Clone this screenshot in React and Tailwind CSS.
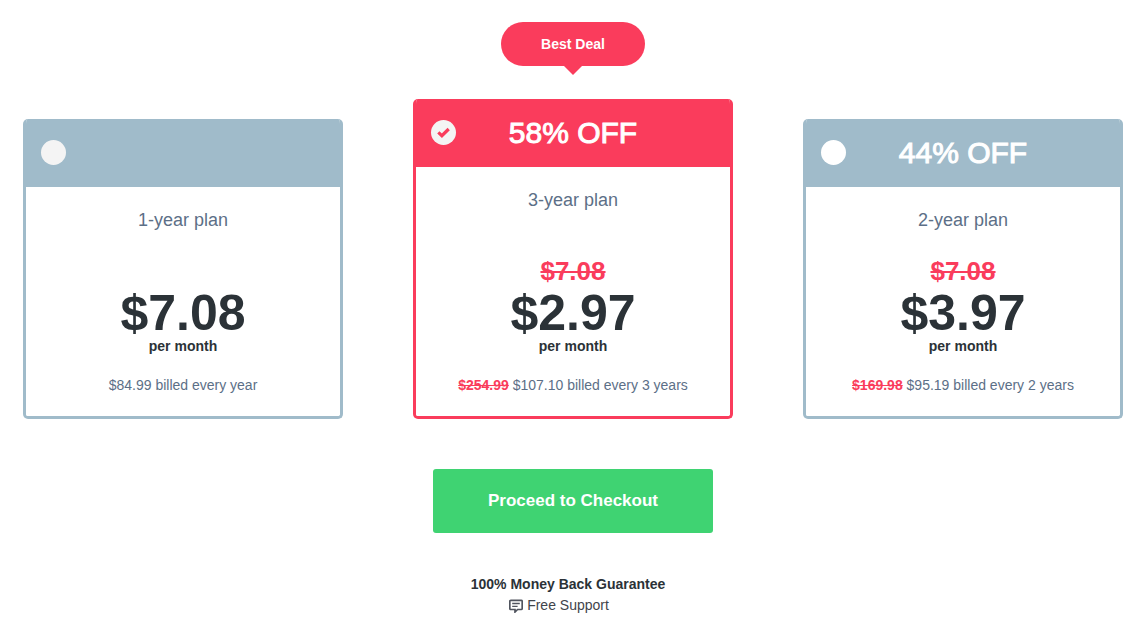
import { useState } from 'react';
import clsx from 'clsx';

const PLANS = [
  { id: '1y', name: '1-year plan', price: '$7.08', billed: '$84.99 billed every year', dot: 'bg-[#f4f4f4]' },
  {
    id: '3y',
    name: '3-year plan',
    off: '58% OFF',
    oldPrice: '$7.08',
    price: '$2.97',
    oldTotal: '$254.99',
    billed: '$107.10 billed every 3 years',
    best: true,
    dot: 'bg-[#f4f4f4]',
  },
  {
    id: '2y',
    name: '2-year plan',
    off: '44% OFF',
    oldPrice: '$7.08',
    price: '$3.97',
    oldTotal: '$169.98',
    billed: '$95.19 billed every 2 years',
    dot: 'bg-white',
  },
];

function PlanCard({ plan, selected, onSelect }) {
  return (
    <label
      htmlFor={`plan-${plan.id}`}
      className={clsx(
        'block w-80 cursor-pointer overflow-hidden rounded-[5px] border-[3px] border-t-0 text-center',
        selected ? 'border-[#fa3c5c]' : 'border-[#a0bbca]'
      )}
    >
      <div
        className={clsx(
          'grid h-[68px] grid-cols-[25px_1fr_25px] items-start px-[15px] pt-[21px]',
          selected ? 'bg-[#fa3c5c]' : 'bg-[#a0bbca]'
        )}
      >
        <span className="grid size-[25px] place-items-center">
          <input
            type="radio"
            name="plan"
            id={`plan-${plan.id}`}
            checked={selected}
            onChange={() => onSelect(plan.id)}
            className={clsx('col-start-1 row-start-1 size-[25px] appearance-none rounded-full', plan.dot)}
          />
          {selected && (
            <svg viewBox="0 0 13 11" className="pointer-events-none col-start-1 row-start-1 h-[11px] w-[13px]" aria-hidden="true">
              <path d="M1.3 5.3 4.9 8.7 11.7 2" fill="none" stroke="#fa3c5c" strokeWidth="3.2" />
            </svg>
          )}
        </span>
        <span className="text-[30px] leading-[26px] text-white [-webkit-text-stroke:1px_white]">{plan.off}</span>
      </div>

      <div className="bg-white pt-5 pb-[21px]">
        <div className="text-lg leading-[26px] text-[#5c6f87]">{plan.name}</div>
        <div className={plan.best ? 'pt-11' : 'pt-6'}>
          <div className="mb-0.5 h-7 text-[26px] leading-7 font-bold text-[#fa3c5c]">
            {plan.oldPrice && <s>{plan.oldPrice}</s>}
          </div>
          <div className="text-[50px] leading-[52px] font-bold text-[#2b3237]">{plan.price}</div>
          <div className="text-sm leading-[14px] font-bold text-[#2b3237]">per month</div>
        </div>
        <div className="mt-[22px] text-sm leading-5 text-[#5c6f87]">
          {plan.oldTotal && <s className="font-bold text-[#fa3c5c]">{plan.oldTotal}</s>} {plan.billed}
        </div>
      </div>
    </label>
  );
}

export default function App() {
  const [selected, setSelected] = useState('3y');

  return (
    <main className="bg-white pt-[22px] pr-[17px] pl-[23px] font-['Liberation_Sans',Arial,sans-serif]">
      <div className="flex items-end justify-between gap-4">
        {PLANS.map((plan) => (
          <div key={plan.id} className="flex flex-col items-center">
            {plan.best && (
              <div className="relative mb-[33px] rounded-full bg-[#fa3c5c] px-10 py-3 text-sm leading-5 font-bold text-white">
                Best Deal
                <svg viewBox="0 0 18 9" className="absolute top-full left-1/2 h-[9px] w-[18px] -translate-x-1/2" aria-hidden="true">
                  <path d="M0 0h18L9 9z" fill="#fa3c5c" />
                </svg>
              </div>
            )}
            <PlanCard plan={plan} selected={selected === plan.id} onSelect={setSelected} />
          </div>
        ))}
      </div>

      <div className="mt-[50px] flex flex-col items-center">
        <button
          type="button"
          className="h-16 w-[280px] cursor-pointer rounded-[3px] bg-[#3fd372] text-[17px] font-bold text-white"
        >
          Proceed to Checkout
        </button>
        <div className="mt-[41px] flex flex-col items-center pr-[10px] text-sm leading-[21px] text-[#2b3237]">
          <p className="font-bold">100% Money Back Guarantee</p>
          <p className="flex items-center gap-1 pr-[18px] text-[#3f444b]">
            <svg viewBox="0 0 14 14" className="size-[14px]" fill="none" stroke="#50545e" strokeWidth="1.7" aria-hidden="true">
              <path d="M1.8 1.3h10.4q1 0 1 1v7.2q0 1-1 1H8.6L6 13v-2.5H1.8q-1 0-1-1V2.3q0-1 1-1z" />
              <path d="M3.2 4.5h7.6M3.2 7.3h5.4" strokeWidth="1.3" />
            </svg>
            Free Support
          </p>
        </div>
      </div>
    </main>
  );
}
